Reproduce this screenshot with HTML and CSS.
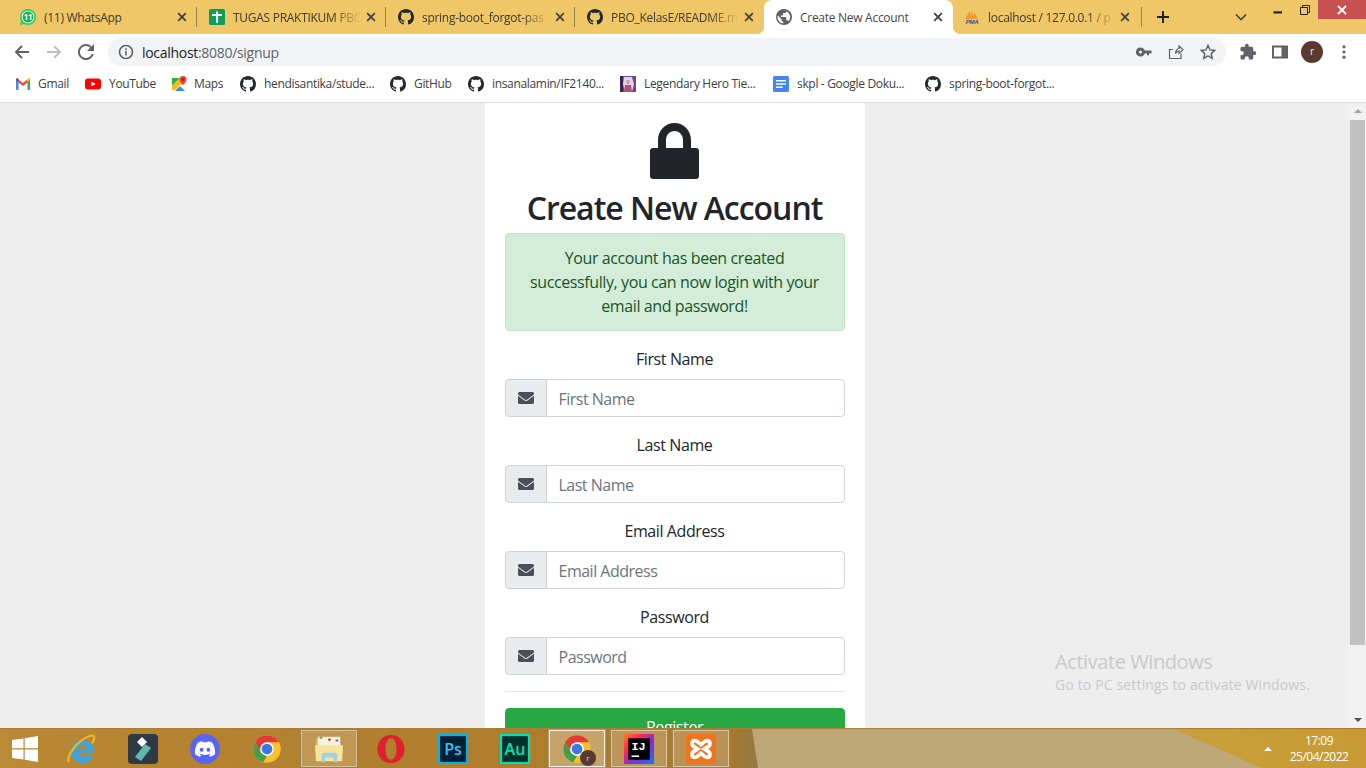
FILE: index.html
```html
<!DOCTYPE html>
<html lang="en">
<head>
<meta charset="utf-8">
<title>Create New Account</title>
<link rel="stylesheet" href="styles.css">
</head>
<body>
<svg class="defs" aria-hidden="true">
  <symbol id="gh" viewBox="0 0 16 16"><path fill="#24292f" d="M8 0C3.58 0 0 3.58 0 8c0 3.54 2.29 6.53 5.47 7.59.4.07.55-.17.55-.38 0-.19-.01-.82-.01-1.49-2.01.37-2.53-.49-2.69-.94-.09-.23-.48-.94-.82-1.13-.28-.15-.68-.52-.01-.53.63-.01 1.08.58 1.23.82.72 1.21 1.87.87 2.33.66.07-.52.28-.87.51-1.07-1.78-.2-3.64-.89-3.64-3.95 0-.87.31-1.59.82-2.15-.08-.2-.36-1.02.08-2.12 0 0 .67-.21 2.2.82.64-.18 1.32-.27 2-.27.68 0 1.36.09 2 .27 1.53-1.04 2.2-.82 2.2-.82.44 1.1.16 1.92.08 2.12.51.56.82 1.27.82 2.15 0 3.07-1.87 3.75-3.65 3.95.29.25.54.73.54 1.48 0 1.07-.01 1.93-.01 2.2 0 .21.15.46.55.38A8.013 8.013 0 0016 8c0-4.42-3.58-8-8-8z"/></symbol>
  <symbol id="x" viewBox="0 0 10 10"><path d="M1.2 1.2l7.6 7.6M8.8 1.2L1.2 8.8" stroke="#3c4043" stroke-width="1.7" fill="none"/></symbol>
  <symbol id="env" viewBox="0 0 512 512"><path fill="#495057" d="M502.3 190.8c3.9-3.1 9.7-.2 9.7 4.7V400c0 26.5-21.5 48-48 48H48c-26.5 0-48-21.5-48-48V195.6c0-5 5.7-7.8 9.7-4.7 22.4 17.4 52.1 39.5 154.1 113.6 21.1 15.4 56.7 47.8 92.2 47.6 35.7.3 72-32.8 92.3-47.6 102-74.1 131.6-96.3 154-113.7zM256 320c23.2.4 56.6-29.2 73.4-41.4 132.7-96.3 142.8-104.7 173.4-128.7 5.8-4.5 9.2-11.5 9.2-18.9v-19c0-26.5-21.5-48-48-48H48C21.5 64 0 85.5 0 112v19c0 7.4 3.4 14.3 9.2 18.9 30.6 23.9 40.7 32.4 173.4 128.7 16.8 12.2 50.2 41.8 73.4 41.4z"/></symbol>
  <symbol id="chrome" viewBox="0 0 48 48"><circle cx="24" cy="24" r="22" fill="#fbc02d"/><path fill="#e53935" d="M4.95 13A22 22 0 0 1 43.05 13H24L14.5 29.5z"/><path fill="#43a047" d="M4.95 13 14.5 29.5 24 35l-6 10.2A22 22 0 0 1 4.95 13z"/><circle cx="24" cy="24" r="11" fill="#fff"/><circle cx="24" cy="24" r="8.6" fill="#3b78e7"/></symbol>
</svg>

<header class="tabstrip">
  <div class="tab sep">
    <svg class="fav" viewBox="0 0 16 16"><path fill="#25d366" d="M8 0a8 8 0 0 0-6.9 12L0 16l4.1-1.1A8 8 0 1 0 8 0z"/><circle cx="8" cy="8" r="6.300" fill="#fff"/><circle cx="8" cy="8" r="5.400" fill="#1faa53"/><text class="fav-num" x="8" y="11" text-anchor="middle">11</text></svg>
    <span class="title">(11) WhatsApp</span>
    <svg class="close"><use href="#x"/></svg>
  </div>
  <div class="tab sep">
    <svg class="fav" viewBox="0 0 16 16"><rect width="16" height="16" rx="1.5" fill="#0f9d58"/><path fill="#fff" d="M7 2.500h2V14H7zM3 5h10v2H3z"/></svg>
    <span class="title fade">TUGAS PRAKTIKUM PBC</span>
    <svg class="close"><use href="#x"/></svg>
  </div>
  <div class="tab sep">
    <svg class="fav"><use href="#gh"/></svg>
    <span class="title fade">spring-boot_forgot-pas</span>
    <svg class="close"><use href="#x"/></svg>
  </div>
  <div class="tab">
    <svg class="fav"><use href="#gh"/></svg>
    <span class="title fade">PBO_KelasE/README.m</span>
    <svg class="close"><use href="#x"/></svg>
  </div>
  <div class="tab active">
    <svg class="fav" viewBox="0 0 16 16"><circle cx="8" cy="8" r="8" fill="#5f6368"/><path fill="#fff" d="M7.2 14.4A6.5 6.5 0 0 1 1.7 6.4L5.5 10.2v.8c0 .9.7 1.6 1.7 1.6zM12.6 12.4c-.2-.7-.8-1.1-1.5-1.1h-.8V8.9c0-.4-.4-.8-.8-.8H4.7V6.500h1.600c.4 0 .8-.4.8-.8V4.100h1.600c.9 0 1.600-.7 1.600-1.600v-.3a6.500 6.500 0 0 1 2.300 10.200z"/></svg>
    <span class="title">Create New Account</span>
    <svg class="close"><use href="#x"/></svg>
  </div>
  <div class="tab sep tab-last">
    <svg class="fav" viewBox="0 0 16 16"><path fill="#f7931e" d="M1 10 6 2l1 8zM7 10l1-9 2 9zM10.500 10 10 3l4 7z"/><text class="pma" x="8" y="15" text-anchor="middle">PMA</text></svg>
    <span class="title fade">localhost / 127.0.0.1 / p</span>
    <svg class="close"><use href="#x"/></svg>
  </div>
  <svg class="plus" viewBox="0 0 12 12"><path d="M6 0v12M0 6h12" stroke="#202124" stroke-width="2"/></svg>
  <svg class="chev" viewBox="0 0 12 8"><path d="M1 1.500l5 5 5-5" stroke="#3c4043" stroke-width="1.600" fill="none"/></svg>
  <div class="winctl">
    <span class="wbtn"><svg class="w-ico" viewBox="0 0 10 10"><rect x=".5" y="6.300" width="8.500" height="2.200" fill="#202124"/></svg></span>
    <span class="wbtn"><svg class="w-ico" viewBox="0 0 10 10"><path d="M.5 2.500h7v7h-7zM2.500 2.500v-2h7v7h-2" fill="none" stroke="#202124"/></svg></span>
    <span class="wbtn wclose"><svg class="w-ico" viewBox="0 0 10 10"><path d="M1 1l8 8M9 1L1 9" stroke="#fff" stroke-width="1.800"/></svg></span>
  </div>
</header>

<nav class="toolbar">
  <span class="tbtn"><svg class="t16" viewBox="0 0 16 16"><path d="M15 8H2M8 2 2 8l6 6" stroke="#5f6368" stroke-width="2" fill="none"/></svg></span>
  <span class="tbtn"><svg class="t16" viewBox="0 0 16 16"><path d="M1 8h13M8 2l6 6-6 6" stroke="#bdc1c6" stroke-width="2" fill="none"/></svg></span>
  <span class="tbtn"><svg class="t16" viewBox="0 0 16 16"><path fill="#5f6368" d="M13.600 2.400A8 8 0 1 0 15.700 10h-2.100A6 6 0 1 1 8 2c1.700 0 3.100.7 4.200 1.800L9 7h7V0z"/></svg></span>
  <div class="omni">
    <svg class="t16" viewBox="0 0 16 16"><circle cx="8" cy="8" r="6.500" fill="none" stroke="#5f6368" stroke-width="1.600"/><path fill="#5f6368" d="M7.200 7h1.600v4.500H7.200zM7.200 4.300h1.600v1.600H7.200z"/></svg>
    <span class="url"><span class="host">localhost</span>:8080/signup</span>
    <span class="obtn"><svg class="t16" viewBox="0 0 16 16"><path fill="#5f6368" d="M4.500 3.500a4.500 4.500 0 1 0 4.200 6h2.300v1.800h2V9.500H15.500V6.500H8.700a4.500 4.500 0 0 0-4.200-3zm0 3a1.500 1.500 0 1 1 0 3 1.500 1.500 0 0 1 0-3z"/></svg></span>
    <span class="obtn"><svg class="t16" viewBox="0 0 16 16"><path d="M13 9.500V14.500H1.500V5.500H5M7.500 9.500C7.500 6.500 9.500 4.500 11 4.500V2l4 3.800-4 3.700V7.200C9.500 7.200 8.300 8 7.500 9.500z" fill="none" stroke="#5f6368" stroke-width="1.200"/></svg></span>
    <span class="obtn"><svg class="t16" viewBox="0 0 16 16"><path d="M8 1.500l2 4.400 4.800.5-3.600 3.200 1 4.700L8 11.900l-4.200 2.400 1-4.700L1.200 6.400 6 5.900z" fill="none" stroke="#5f6368" stroke-width="1.500"/></svg></span>
  </div>
  <span class="tbtn first-ext"><svg class="t18" viewBox="0 0 24 24"><path fill="#5f6368" d="M20.500 11H19V7c0-1.100-.9-2-2-2h-4V3.500C13 2.120 11.880 1 10.500 1S8 2.120 8 3.500V5H4c-1.100 0-1.990.9-1.990 2v3.800H3.500c1.490 0 2.700 1.210 2.700 2.700s-1.210 2.700-2.700 2.700H2V20c0 1.100.9 2 2 2h3.800v-1.500c0-1.490 1.210-2.700 2.700-2.700 1.490 0 2.700 1.210 2.700 2.700V22H17c1.100 0 2-.9 2-2v-4h1.500c1.380 0 2.500-1.120 2.500-2.500S21.880 11 20.500 11z"/></svg></span>
  <span class="tbtn"><svg class="t16" viewBox="0 0 16 16"><path d="M1 2.500h14v11H1z" fill="none" stroke="#5f6368" stroke-width="2"/><path d="M9.500 2h6v12h-6z" fill="#5f6368"/></svg></span>
  <span class="tbtn"><span class="avatar">r</span></span>
  <span class="tbtn"><svg class="t16" viewBox="0 0 16 16"><circle cx="8" cy="2.800" r="1.600" fill="#5f6368"/><circle cx="8" cy="8" r="1.600" fill="#5f6368"/><circle cx="8" cy="13.200" r="1.600" fill="#5f6368"/></svg></span>
</nav>

<div class="bookmarks">
  <a class="bm tight"><svg class="fav" viewBox="0 0 16 16"><path fill="#4285f4" d="M1 3.500h2.500V14H1.900C1.400 14 1 13.600 1 13.100z"/><path fill="#34a853" d="M12.500 3.500H15v9.600c0 .5-.4.9-.9.9h-1.600z"/><path fill="#ea4335" d="M3.500 3.500 8 7l4.500-3.500v3L8 10 3.500 6.500z"/><path fill="#c5221f" d="M1 3.500C1 2.500 2.200 1.900 3 2.500l.5 1v3z"/><path fill="#fbbc04" d="M15 3.500c0-1-1.200-1.600-2-1l-.5 1v3z"/></svg><span>Gmail</span></a>
  <a class="bm"><svg class="fav" viewBox="0 0 16 16"><rect y="2.500" width="16" height="11" rx="3" fill="#f00"/><path fill="#fff" d="M6.400 5.600 10.600 8 6.400 10.400z"/></svg><span>YouTube</span></a>
  <a class="bm tight"><svg class="fav" viewBox="0 0 16 16"><path fill="#34a853" d="M1 2h8L1 10z"/><path fill="#fbbc04" d="M1 10 9 2l3 4-8 8H1z"/><path fill="#4285f4" d="M4 15l5-5 5 5z"/><path fill="#ea4335" d="M12 0a3.500 3.500 0 0 0-3.500 3.500C8.500 6 12 9 12 9s3.500-3 3.500-5.500A3.500 3.500 0 0 0 12 0z"/><circle cx="12" cy="3.500" r="1.200" fill="#a50e0e"/></svg><span>Maps</span></a>
  <a class="bm"><svg class="fav"><use href="#gh"/></svg><span>hendisantika/stude...</span></a>
  <a class="bm"><svg class="fav"><use href="#gh"/></svg><span>GitHub</span></a>
  <a class="bm"><svg class="fav"><use href="#gh"/></svg><span>insanalamin/IF2140...</span></a>
  <a class="bm"><svg class="fav" viewBox="0 0 16 16"><rect width="16" height="16" fill="#6b4a8a"/><path fill="#e6d2e6" d="M4 1h8l2 7-2 8H5L3 8z"/><path fill="#b0507e" d="M5 9h6l1 7H4z"/><path fill="#caa08c" d="M6.500 4h3v4h-3z"/><rect width="3" height="16" fill="#3a2550"/></svg><span>Legendary Hero Tie...</span></a>
  <a class="bm"><svg class="fav" viewBox="0 0 16 16"><rect width="16" height="16" rx="1.500" fill="#4285f4"/><path fill="#fff" d="M3 4h10v1.600H3zM3 7.200h10v1.600H3zM3 10.400h6.500V12H3z"/></svg><span>skpl - Google Doku...</span></a>
  <a class="bm"><svg class="fav"><use href="#gh"/></svg><span>spring-boot-forgot...</span></a>
</div>

<div class="screen">
  <main class="page">
    <section class="card">
      <svg class="lock" viewBox="0 0 49 56"><path fill="#212529" fill-rule="evenodd" d="M8 25V17C8 7.600 15.100 0 24.500 0S41 7.600 41 17V25H46C47.700 25 49 26.300 49 28V53C49 54.700 47.700 56 46 56H3C1.300 56 0 54.700 0 53V28C0 26.300 1.300 25 3 25zM16 25H33V17C33 12 29.500 8 24.500 8S16 12 16 17z"/></svg>
      <h1 class="heading">Create New Account</h1>
      <div class="alert">Your account has been created successfully, you can now login with your email and password!</div>
      <form class="form">
        <div class="group">
          <label class="label">First Name</label>
          <div class="igroup"><span class="addon"><svg class="env"><use href="#env"/></svg></span><input class="input" placeholder="First Name"></div>
        </div>
        <div class="group">
          <label class="label">Last Name</label>
          <div class="igroup"><span class="addon"><svg class="env"><use href="#env"/></svg></span><input class="input" placeholder="Last Name"></div>
        </div>
        <div class="group">
          <label class="label">Email Address</label>
          <div class="igroup"><span class="addon"><svg class="env"><use href="#env"/></svg></span><input class="input" placeholder="Email Address"></div>
        </div>
        <div class="group">
          <label class="label">Password</label>
          <div class="igroup"><span class="addon"><svg class="env"><use href="#env"/></svg></span><input class="input" placeholder="Password"></div>
        </div>
        <hr class="rule">
        <button class="submit" type="button">Register</button>
      </form>
    </section>
  </main>
  <aside class="scrollbar">
    <span class="sb-up"></span>
    <span class="sb-thumb"></span>
    <span class="sb-track"></span>
    <span class="sb-down"></span>
  </aside>
  <div class="activate">
    <div class="act-1">Activate Windows</div>
    <div class="act-2">Go to PC settings to activate Windows.</div>
  </div>
</div>

<footer class="taskbar">
  <span class="start"><svg class="winlogo" viewBox="0 0 26 26"><path fill="#fff" d="M0 4l11.500-1.600V12.300H0zM12.700 2.200 26 0V12.300H12.700zM0 13.600H11.500V23.500L0 22zM12.700 13.600H26V26L12.700 23.700z"/></svg></span>
  <span class="tk"><svg class="tk-ico" viewBox="0 0 32 32"><g transform="translate(-.4 -.5) scale(1.120)"><path fill="#38a7e4" d="M16 6a11 11 0 1 0 10.400 14.500h-6.500a5 5 0 0 1-8.600-2.300H27V16A11 11 0 0 0 16 6zm-4.700 9a5 5 0 0 1 9.500 0z"/></g><path d="M3 30C.5 25 8 13 17 6.500c5-3.600 11-6 12.500-4.300C31 4 29 8 27.500 10" fill="none" stroke="#f2b51d" stroke-width="2.400"/></svg></span>
  <span class="tk"><svg class="tk-ico" viewBox="0 0 30 30"><rect width="30" height="30" rx="4" fill="#2f3a46"/><path fill="#fff" d="M14 3l5 5-5 5-5-5z"/><path fill="#5fb8ae" d="M17 10l6 4-10 13-6-4z"/></svg></span>
  <span class="tk"><svg class="tk-ico" viewBox="0 0 32 32"><circle cx="16" cy="16" r="16" fill="#5865f2"/><g transform="translate(5.200 5.200) scale(.9)"><path fill="#fff" d="M20.317 4.370a19.791 19.791 0 0 0-4.885-1.515.074.074 0 0 0-.079.037c-.21.375-.444.864-.608 1.250a18.270 18.270 0 0 0-5.487 0 12.640 12.640 0 0 0-.617-1.250.077.077 0 0 0-.079-.037A19.736 19.736 0 0 0 3.677 4.370a.07.07 0 0 0-.032.027C.533 9.046-.32 13.580.099 18.057a.082.082 0 0 0 .031.057 19.900 19.900 0 0 0 5.993 3.030.078.078 0 0 0 .084-.028 14.090 14.090 0 0 0 1.226-1.994.076.076 0 0 0-.041-.106 13.107 13.107 0 0 1-1.872-.892.077.077 0 0 1-.008-.128 10.200 10.200 0 0 0 .372-.292.074.074 0 0 1 .077-.01c3.928 1.793 8.180 1.793 12.062 0a.074.074 0 0 1 .078.01c.12.098.246.198.373.292a.077.077 0 0 1-.006.127 12.299 12.299 0 0 1-1.873.892.077.077 0 0 0-.041.107c.36.698.772 1.362 1.225 1.993a.076.076 0 0 0 .084.028 19.839 19.839 0 0 0 6.002-3.030.077.077 0 0 0 .032-.054c.5-5.177-.838-9.674-3.549-13.660a.061.061 0 0 0-.031-.03zM8.020 15.330c-1.183 0-2.157-1.085-2.157-2.419 0-1.333.956-2.419 2.157-2.419 1.210 0 2.176 1.096 2.157 2.420 0 1.333-.956 2.418-2.157 2.418zm7.975 0c-1.183 0-2.157-1.085-2.157-2.419 0-1.333.955-2.419 2.157-2.419 1.210 0 2.176 1.096 2.157 2.420 0 1.333-.946 2.418-2.157 2.418z"/></g></svg></span>
  <span class="tk"><svg class="tk-ico"><use href="#chrome"/></svg></span>
  <span class="tk open"><svg class="tk-ico" viewBox="0 0 32 32"><path fill="#d9b45c" d="M2 5h8l2 2h16v8H2z"/><rect x="4" y="3" width="24" height="10" fill="#f7f3e0"/><rect x="6" y="3" width="3" height="2" fill="#3fb24a"/><rect x="15" y="5" width="3" height="2" fill="#c0392b"/><rect x="23" y="6" width="3" height="2" fill="#2980d9"/><path fill="#f6e59a" d="M1 12h30l-1 17H2z"/><path fill="#9fd0e8" d="M8 30v-7c0-2 1-3 3-3h11c2 0 3 1 3 3v7h-4v-5H12v5z"/></svg></span>
  <span class="tk"><svg class="tk-ico" viewBox="0 0 32 32"><path fill="#e0202c" fill-rule="evenodd" d="M16 1c8.800 0 14.500 6.700 14.500 15S24.800 31 16 31 1.500 24.300 1.500 16 7.200 1 16 1zm0 3.500c-3.800 0-5.800 5.200-5.800 11.500S12.200 27.500 16 27.500s5.800-5.200 5.800-11.500S19.800 4.500 16 4.500z"/></svg></span>
  <span class="tk"><svg class="tk-ico" viewBox="0 0 28 28"><rect x="1" y="1" width="26" height="26" fill="#001e36" stroke="#00b4f0" stroke-width="2"/><text class="ic-text ps" x="14" y="20" text-anchor="middle">Ps</text></svg></span>
  <span class="tk"><svg class="tk-ico" viewBox="0 0 28 28"><rect x="1" y="1" width="26" height="26" fill="#00302a" stroke="#00dfb8" stroke-width="2"/><text class="ic-text au" x="14" y="20" text-anchor="middle">Au</text></svg></span>
  <span class="tk open strong"><svg class="tk-ico"><use href="#chrome"/></svg><span class="tk-badge">r</span></span>
  <span class="tk open soft"><svg class="tk-ico" viewBox="0 0 28 28"><defs><linearGradient id="ij" x1="0" y1="0" x2="1" y2="1"><stop offset="0" stop-color="#fc801d"/><stop offset=".3" stop-color="#fe2857"/><stop offset=".6" stop-color="#7b2fdc"/><stop offset="1" stop-color="#087cfa"/></linearGradient></defs><rect width="28" height="28" fill="url(#ij)"/><rect x="4" y="4" width="20" height="20" fill="#000"/><text class="ij" x="7" y="15">IJ</text><rect x="7" y="20" width="7" height="1.500" fill="#fff"/></svg></span>
  <span class="tk open soft"><svg class="tk-ico" viewBox="0 0 32 32"><rect width="32" height="32" rx="3" fill="#f3721d"/><path d="M9.500 7c-4 0-4 6 0 7l3 2-3 2c-4 1-4 7 0 7 3 0 4.500-3 6.500-4.500 2 1.500 3.500 4.500 6.500 4.500 4 0 4-6 0-7l-3-2 3-2c4-1 4-7 0-7-3 0-4.500 3-6.500 4.500C14 10 12.500 7 9.500 7z" fill="none" stroke="#fff" stroke-width="4"/></svg></span>
  <div class="tray">
    <svg class="caret" viewBox="0 0 8 4"><path fill="#fff" d="M4 0l4 4H0z"/></svg>
    <div class="clock"><span>17:09</span><span>25/04/2022</span></div>
  </div>
</footer>
</body>
</html>
```
FILE: styles.css
```css
* { box-sizing: border-box; }
html, body { margin: 0; height: 100%; }
body {
  height: 768px;
  overflow: hidden;
  display: flex;
  flex-direction: column;
  font-family: "Open Sans", "Noto Sans", sans-serif;
  background: #eee;
  color: #212529;
}
.defs { display: none; }

/* tab strip */
.tabstrip {
  height: 34px;
  flex: none;
  display: flex;
  align-items: center;
  padding-left: 8px;
  background: #f0c766;
}
.tab {
  position: relative;
  width: 189px;
  height: 34px;
  flex: none;
  display: flex;
  align-items: center;
  padding: 0 7px 0 12px;
  gap: 8px;
  font-size: 12px;
  letter-spacing: -.28px;
  color: #3c3a34;
}
.tab.sep::after {
  content: "";
  position: absolute;
  right: 0;
  top: 7px;
  width: 1px;
  height: 20px;
  background: #9c8450;
}
.tab.active {
  background: #fff;
  border-radius: 8px 8px 0 0;
  color: #45474b;
}
.tab.active::before,
.tab.active::after {
  content: "";
  position: absolute;
  bottom: 0;
  width: 8px;
  height: 8px;
}
.tab.active::before {
  left: -8px;
  background: radial-gradient(circle at 0 0, transparent 8px, #fff 8.5px);
}
.tab.active::after {
  right: -8px;
  background: radial-gradient(circle at 100% 0, transparent 8px, #fff 8.5px);
}
.tab-last { padding: 0 9px 0 11px; }
.fav { width: 16px; height: 16px; flex: none; }
.fav-num { font: 700 8px "Open Sans", sans-serif; fill: #fff; }
.pma { font: italic 700 6px "Liberation Sans", sans-serif; fill: #2b4fa8; }
.title { flex: 1; min-width: 0; white-space: nowrap; }
.title.fade {
  -webkit-mask-image: linear-gradient(90deg, #000 78%, transparent 100%);
  mask-image: linear-gradient(90deg, #000 78%, transparent 100%);
}
.close { width: 10px; height: 10px; flex: none; margin: 0 3px 0 -3px; }
.plus { width: 12px; height: 12px; flex: none; margin-left: 15px; }
.chev { width: 12px; height: 8px; flex: none; margin-left: 66px; }
.winctl {
  display: flex;
  align-self: flex-start;
  margin-left: auto;
}
.wbtn {
  width: 27px;
  height: 19px;
  display: flex;
  align-items: center;
  justify-content: center;
}
.wclose { width: 48px; background: #c75050; }
.w-ico { width: 10px; height: 10px; }

/* toolbar */
.toolbar {
  height: 34px;
  flex: none;
  display: flex;
  align-items: center;
  padding: 2px 6px 0;
  background: #fff;
}
.tbtn {
  width: 32px;
  height: 28px;
  flex: none;
  display: flex;
  align-items: center;
  justify-content: center;
}
.t16 { width: 16px; height: 16px; flex: none; }
.t18 { width: 18px; height: 18px; flex: none; }
.omni {
  flex: 1;
  height: 28px;
  margin-left: 6px;
  display: flex;
  align-items: center;
  gap: 8px;
  padding: 0 2px 0 10px;
  border-radius: 14px;
  background: #f1f3f4;
}
.url {
  flex: 1;
  font-size: 14px;
  letter-spacing: -.3px;
  color: #5f6368;
}
.host { color: #202124; }
.obtn {
  width: 32px;
  margin-left: -8px;
  flex: none;
  display: flex;
  justify-content: center;
}
.first-ext { margin-left: 6px; }
.avatar {
  width: 22px;
  height: 22px;
  border-radius: 50%;
  background: #5a3a30;
  color: #f2e8e4;
  font-size: 10px;
  line-height: 21px;
  text-align: center;
}

/* bookmarks */
.bookmarks {
  height: 35px;
  flex: none;
  display: grid;
  grid-template-columns: 70px 86px 69px 150px 78px 152px 153px 152px 160px;
  align-items: center;
  padding: 0 0 3px 15px;
  background: #fff;
  border-bottom: 1px solid #dadce0;
  font-size: 12px;
  letter-spacing: -.33px;
  color: #3c4043;
}
.bm {
  display: flex;
  align-items: center;
  gap: 8px;
  white-space: nowrap;
}
.bm.tight { gap: 7px; }

/* page */
.screen {
  position: relative;
  flex: 1;
  min-height: 0;
  display: flex;
  overflow: hidden;
}
.page { flex: 1; min-width: 0; overflow: hidden; }
.card {
  width: 380px;
  margin: 0 auto;
  padding: 20px 20px 40px;
  background: #fff;
  font-size: 16px;
  line-height: 24px;
  letter-spacing: -.4px;
}
.lock { display: block; width: 49px; height: 56px; margin: 0 auto 10px; }
.heading {
  margin: 0 0 6px;
  font-size: 32px;
  font-weight: 600;
  line-height: 38.4px;
  letter-spacing: -1.03px;
  text-align: center;
}
.alert {
  padding: 12px 20px;
  margin-bottom: 16px;
  border: 1px solid #c3e6cb;
  border-radius: 4px;
  background: #d4edda;
  color: #155724;
  text-align: center;
}
.group { margin-bottom: 16px; text-align: center; }
.label { display: block; margin-bottom: 8px; }
.igroup { display: flex; height: 38px; }
.addon {
  width: 42px;
  flex: none;
  display: flex;
  align-items: center;
  justify-content: center;
  background: #e9ecef;
  border: 1px solid #ced4da;
  border-radius: 4px 0 0 4px;
}
.env { width: 16px; height: 16px; }
.input {
  flex: 1;
  min-width: 0;
  margin-left: -1px;
  padding: 8px 12px 6px;
  border: 1px solid #ced4da;
  border-radius: 0 4px 4px 0;
  background: #fff;
  font: inherit;
  letter-spacing: -.5px;
  color: #495057;
}
.input::placeholder { color: #6c757d; opacity: 1; }
.rule { margin: 16px 0; border: 0; border-top: 1px solid rgba(0,0,0,.1); }
.submit {
  display: block;
  width: 100%;
  height: 38px;
  border: 1px solid #28a745;
  border-radius: 4px;
  background: #28a745;
  color: #fff;
  font: inherit;
  letter-spacing: inherit;
}

/* scrollbar */
.scrollbar {
  width: 17px;
  flex: none;
  display: flex;
  flex-direction: column;
  align-items: center;
  background: #f1f1f1;
}
.sb-up, .sb-down {
  width: 0;
  height: 0;
  flex: none;
  border-left: 4px solid transparent;
  border-right: 4px solid transparent;
}
.sb-up { margin: 6px 0 7px; border-bottom: 4px solid #a3a3a3; }
.sb-down { margin: 6px 0 6px; border-top: 4px solid #505050; }
.sb-thumb { width: 15px; height: 525px; flex: none; background: #c1c1c1; }
.sb-track { flex: 1; }

.activate {
  position: absolute;
  left: 1055px;
  top: 546px;
  color: #c9c9c9;
  white-space: nowrap;
}
.act-1 { font-size: 20px; line-height: 26px; letter-spacing: -.42px; }
.act-2 { font-size: 14px; line-height: 20px; letter-spacing: .15px; }

/* taskbar */
.taskbar {
  position: relative;
  height: 40px;
  flex: none;
  display: flex;
  align-items: center;
  background: linear-gradient(90deg, #ba8a36 0, #b58330 12%, #ac7c2c 45%, #a8792b 53%, #97783f 55%, #c9a03a 85%, #c89a33 100%);
  border-top: 1px solid #a97d33;
}
.taskbar::before {
  content: "";
  position: absolute;
  inset: 0;
  background: #bfa878;
  clip-path: polygon(752px 0, 1173px 0, 1262px 100%, 758px 100%);
}
.start {
  position: relative;
  width: 50px;
  height: 39px;
  flex: none;
  display: flex;
  align-items: center;
  padding-left: 12px;
}
.winlogo { width: 26px; height: 26px; }
.tk {
  position: relative;
  width: 58px;
  height: 39px;
  flex: none;
  margin: 0 2px;
  display: flex;
  align-items: center;
  justify-content: center;
}
.tk-ico { width: 30px; height: 30px; }
.tk.open {
  background: rgba(255,255,255,.18);
  border: 2px solid rgba(255,255,255,.4);
  outline: 1px solid rgba(90,60,20,.5);
  outline-offset: -1px;
}
.tk.strong { background: rgba(255,255,255,.3); border-color: rgba(255,255,255,.85); }
.tk.soft { background: rgba(255,255,255,.2); border-color: rgba(255,255,255,.45); }
.tk-badge {
  position: absolute;
  left: 30px;
  top: 19px;
  width: 16px;
  height: 16px;
  border-radius: 50%;
  background: #5a3a30;
  color: #e8dcd8;
  font-size: 8px;
  line-height: 15px;
  text-align: center;
}
.ic-text { font-family: "Open Sans", sans-serif; font-weight: 600; }
.ps { font-size: 15px; fill: #31c5f4; }
.au { font-size: 15px; fill: #00e4bb; }
.ij { font: 700 11px "Liberation Mono", monospace; fill: #fff; }
.tray {
  position: relative;
  margin-left: auto;
  display: flex;
  align-items: center;
  color: #fff;
}
.caret { width: 8px; height: 4px; margin-right: 18px; }
.clock {
  width: 76px;
  padding-right: 18px;
  display: flex;
  flex-direction: column;
  align-items: center;
  font-size: 12px;
  line-height: 16px;
  letter-spacing: -.5px;
}
```
